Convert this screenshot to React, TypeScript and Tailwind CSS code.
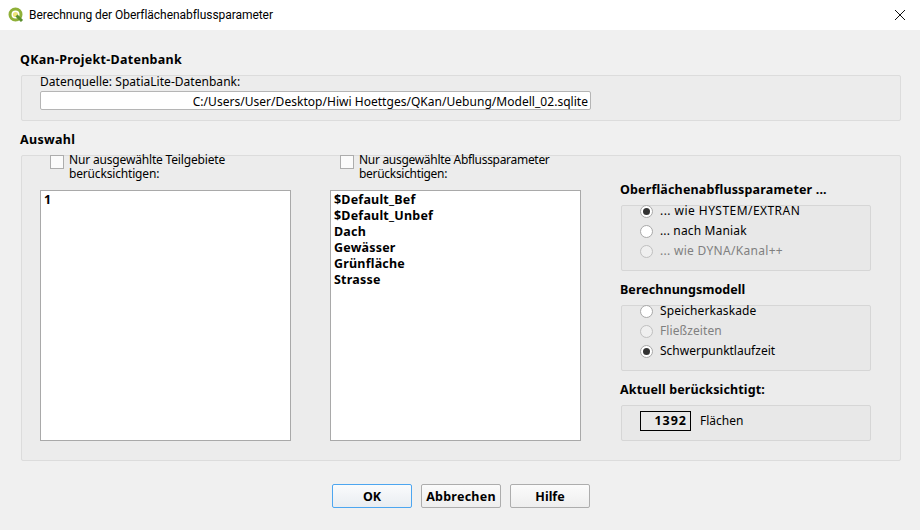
const F = "font-['Noto_Sans','Liberation_Sans',sans-serif]";

function Radio({ checked, disabled }: { checked?: boolean; disabled?: boolean }) {
  return (
    <span className={`flex h-[13px] w-[13px] shrink-0 items-center justify-center rounded-full border ${disabled ? 'border-[#bfbfbf] bg-[#efefef]' : 'border-[#a8a8a8] bg-white'}`}>
      {checked && <span className="h-[7px] w-[7px] rounded-full bg-[#333333]" />}
    </span>
  );
}

function RadioRow({ label, checked, disabled, track = '' }: { label: string; checked?: boolean; disabled?: boolean; track?: string }) {
  return (
    <div className={`flex h-5 items-center gap-[7px] ${disabled ? 'text-[#808080]' : 'text-black'}`}>
      <Radio checked={checked} disabled={disabled} />
      <span className={track}>{label}</span>
    </div>
  );
}

function ListBox({ items }: { items: string[] }) {
  return (
    <div className="h-[251px] w-[251px] border border-[#a9a9a9] bg-white pl-[3px] pt-px text-[12.5px] font-bold leading-4 tracking-[0.2px] text-black">
      {items.map((i) => (
        <div key={i}>{i}</div>
      ))}
    </div>
  );
}

function Check({ label, track }: { label: string; track: string }) {
  return (
    <div className="-mt-[3px] flex h-[28px] w-[251px] items-start gap-[5px] pl-[10px] leading-[14px]">
      <span className="mt-[2px] h-[14px] w-[14px] shrink-0 border border-[#adadad] bg-[#fbfbfb]" />
      <span className={`w-[210px] ${track}`}>{label}</span>
    </div>
  );
}

function Heading({ children, className = '' }: { children: string; className?: string }) {
  return <div className={`text-[12.5px] font-bold leading-4 text-black ${className}`}>{children}</div>;
}

export default function App() {
  return (
    <div className={`flex h-[530px] w-[920px] flex-col overflow-hidden bg-[#f0f0f0] text-[12px] text-black ${F}`}>
      <div className="flex h-[30px] shrink-0 items-center bg-white pl-[8px] pr-[14px]">
        <svg width="16" height="16" viewBox="0 0 16 16" className="shrink-0">
          <circle cx="7.5" cy="7.5" r="5.5" fill="#ffffff" stroke="#8fb038" strokeWidth="3" />
          <circle cx="7.5" cy="7.5" r="2.6" fill="#eee47a" />
          <path d="M8.5 8.5l5.5 5.5" stroke="#5b8f2e" strokeWidth="3" />
        </svg>
        <span className="ml-[5px] font-['Roboto',sans-serif] text-[12px] leading-4 tracking-[-0.05px] text-black">Berechnung der Oberflächenabflussparameter</span>
        <svg width="12" height="12" viewBox="0 0 12 12" className="ml-auto">
          <path d="M1 1l10 10M11 1L1 11" stroke="#111111" strokeWidth="1" fill="none" />
        </svg>
      </div>

      <div className="flex flex-1 flex-col px-[19px] pt-[22px]">
        <Heading className="ml-px tracking-[0.27px]">QKan-Projekt-Datenbank</Heading>
        <div className="ml-[2px] mt-[7px] h-[46px] w-[880px] rounded-[2px] border border-[#dcdcdc] bg-[#ececec] pl-[18px]">
          <div className="-mt-[2px] mb-[2px] leading-[15px] tracking-[0.03px]">Datenquelle: SpatiaLite-Datenbank:</div>
          <div className="h-[19px] w-[551px] rounded-[2px] border border-[#b5b5b5] bg-white pr-[2px] pt-px text-right leading-[17px] tracking-[0.03px]">
            C:/Users/User/Desktop/Hiwi Hoettges/QKan/Uebung/Modell_02.sqlite
          </div>
        </div>

        <Heading className="ml-px mt-[11px] tracking-[0.3px]">Auswahl</Heading>
        <div className="ml-[2px] mt-[7px] flex h-[306px] w-[880px] rounded-[2px] border border-[#dcdcdc] bg-[#ececec] pl-[18px]">
          <div className="flex w-[251px] flex-col">
            <Check label="Nur ausgewählte Teilgebiete berücksichtigen:" track="tracking-[-0.17px]" />
            <div className="mt-[9px]">
              <ListBox items={['1']} />
            </div>
          </div>
          <div className="ml-[39px] flex w-[251px] flex-col">
            <Check label="Nur ausgewählte Abflussparameter berücksichtigen:" track="tracking-[-0.3px]" />
            <div className="mt-[9px]">
              <ListBox items={['$Default_Bef', '$Default_Unbef', 'Dach', 'Gewässer', 'Grünfläche', 'Strasse']} />
            </div>
          </div>
          <div className="ml-[39px] flex w-[251px] flex-col pt-[26px]">
            <Heading className="tracking-[0.16px]">Oberflächenabflussparameter ...</Heading>
            <div className="ml-px mt-[7px] h-[66px] w-[250px] rounded-[2px] border border-[#d6d6d6] bg-[#e8e8e8] pl-[18px]">
              <div className="-mt-[5px]">
                <RadioRow label="... wie HYSTEM/EXTRAN" checked track="tracking-[0.45px]" />
                <RadioRow label="... nach Maniak" track="tracking-[0.15px]" />
                <RadioRow label="... wie DYNA/Kanal++" disabled track="tracking-[0.3px]" />
              </div>
            </div>
            <Heading className="mt-[11px] tracking-[0.05px]">Berechnungsmodell</Heading>
            <div className="ml-px mt-[7px] h-[66px] w-[250px] rounded-[2px] border border-[#d6d6d6] bg-[#e8e8e8] pl-[18px]">
              <div className="-mt-[5px]">
                <RadioRow label="Speicherkaskade" track="tracking-[0.1px]" />
                <RadioRow label="Fließzeiten" disabled track="tracking-[0.1px]" />
                <RadioRow label="Schwerpunktlaufzeit" checked />
              </div>
            </div>
            <Heading className="mt-[11px] tracking-[0.13px]">Aktuell berücksichtigt:</Heading>
            <div className="ml-px mt-[7px] flex h-[36px] w-[250px] items-start rounded-[2px] border border-[#d6d6d6] bg-[#e8e8e8] pl-[18px] pt-[5px]">
              <div className="h-[20px] w-[51px] border border-black pr-[3px] text-right text-[12.5px] font-bold leading-[17px] tracking-[1px]">1392</div>
              <span className="ml-[9px] mt-[1px] leading-[17px]">Flächen</span>
            </div>
          </div>
        </div>

        <div className="ml-[313px] mt-[23px] flex gap-[9px] text-[12.5px] font-bold">
          <button className="h-6 w-20 rounded-[2px] border border-[#4da6f0] bg-gradient-to-b from-[#fafbfc] to-[#e9edf1] pt-px leading-[22px]">OK</button>
          <button className="h-6 w-20 rounded-[2px] border border-[#adadad] bg-gradient-to-b from-[#fbfbfb] to-[#eeeeee] pt-px leading-[22px] tracking-[0.25px]">Abbrechen</button>
          <button className="h-6 w-20 rounded-[2px] border border-[#adadad] bg-gradient-to-b from-[#fbfbfb] to-[#eeeeee] pt-px leading-[22px]">Hilfe</button>
        </div>
      </div>
    </div>
  );
}
